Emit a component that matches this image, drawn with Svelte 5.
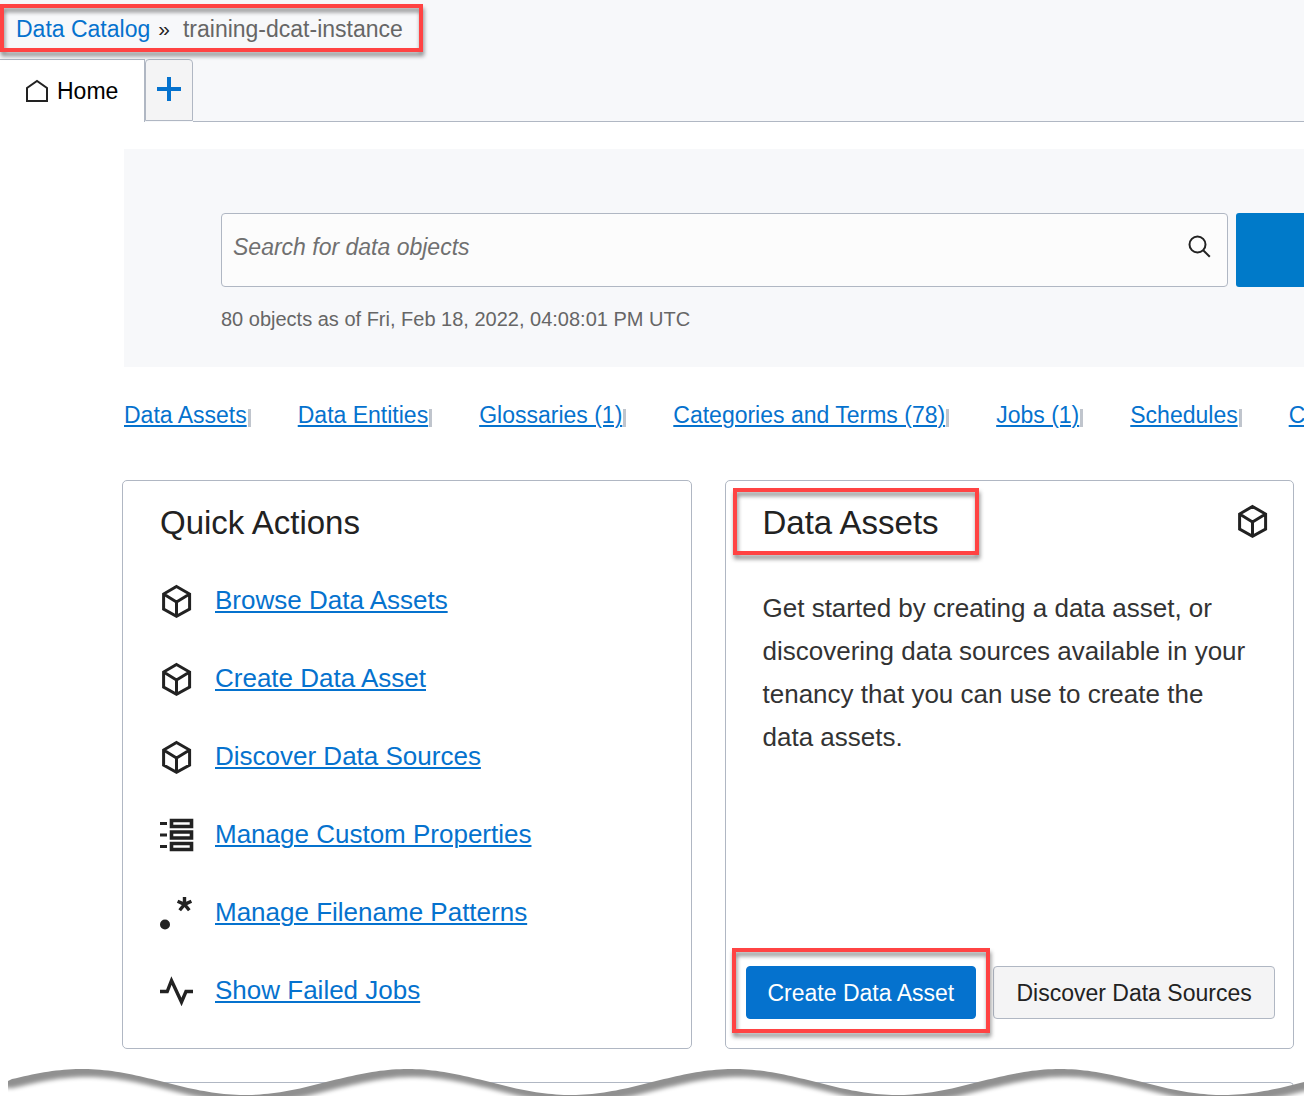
<script>
  const objectLinks = ['Data Assets', 'Data Entities', 'Glossaries (1)', 'Categories and Terms (78)', 'Jobs (1)', 'Schedules', 'C'];
  const actions = [
    { icon: 'cube', label: 'Browse Data Assets' },
    { icon: 'cube', label: 'Create Data Asset' },
    { icon: 'cube', label: 'Discover Data Sources' },
    { icon: 'list', label: 'Manage Custom Properties' },
    { icon: 'pattern', label: 'Manage Filename Patterns' },
    { icon: 'pulse', label: 'Show Failed Jobs' }
  ];

  // Torn page edge: a repeating sine wave, long enough for wide windows.
  const period = 326;
  let wave = '';
  for (let x = 12; x <= 3200; x += 4) {
    wave += ` L${x} ${(13 - 13 * Math.cos(((x - 82) / period) * 2 * Math.PI)).toFixed(1)}`;
  }
  const edge = `M8 12${wave} V60 H8 Z`;
  const paper = `M-40 11 H8${wave} V60 H-40 Z`;
</script>

{#snippet icon(name)}
  <svg class="icon" viewBox="0 0 34 34" aria-hidden="true" fill="none" stroke="#222" stroke-width="3">
    {#if name === 'cube'}
      <path d="M16.5 2.5 29.6 10V25L16.5 32.2 3.6 25V10Z M3.6 10 16.5 18 29.6 10 M16.5 18V32" />
    {:else if name === 'list'}
      <path d="M11.5 2.5H31.5V8.5H11.5Z M11.5 14H31.5V20H11.5Z M11.5 25.5H31.5V31.5H11.5Z" stroke-width="3.6" />
      <path d="M0 5.5H7 M0 17H7 M0 28.5H7" />
    {:else if name === 'pattern'}
      <circle cx="5" cy="28.5" r="5" fill="#222" stroke="none" />
      <path d="M24.5 8.4V1 M24.5 8.4 31.4 5.3 M24.5 8.4 29.3 14.3 M24.5 8.4 19.7 14.3 M24.5 8.4 17.6 5.3" stroke-width="3.4" />
    {:else}
      <path d="M0 17.5H7.2L11.5 6.5 21.5 28 26 17.5H33" stroke-width="3.4" />
    {/if}
  </svg>
{/snippet}

<div class="page">
  <header>
    <nav class="crumbs" aria-label="Breadcrumb">
      <a href="#catalog">Data Catalog</a>
      <span class="sep">»</span>
      <span class="current">training-dcat-instance</span>
      <span class="mark"></span>
    </nav>
    <div class="tabs">
      <button class="home">
        <svg width="24" height="24" viewBox="0 0 24 24" fill="none" stroke="#222" stroke-width="2" aria-hidden="true">
          <path d="M2 22V9L12 2 22 9V22Z" />
        </svg>
        Home
      </button>
      <button class="add" aria-label="Add tab">
        <svg width="24" height="24" viewBox="0 0 24 24" stroke="#0572ce" stroke-width="4" aria-hidden="true">
          <path d="M12 0V24M0 12H24" />
        </svg>
      </button>
      <div class="rest"></div>
    </div>
  </header>

  <main>
    <section class="search">
      <div class="search-row">
        <div class="field">
          <input type="text" placeholder="Search for data objects" aria-label="Search for data objects" />
          <svg width="24" height="24" viewBox="0 0 24 24" fill="none" stroke="#222" stroke-width="2" aria-hidden="true">
            <circle cx="10.5" cy="9.5" r="8" />
            <path d="M16.2 15.2 22.8 21.8" />
          </svg>
        </div>
        <button class="go" aria-label="Search"></button>
      </div>
      <p>80 objects as of Fri, Feb 18, 2022, 04:08:01 PM UTC</p>
    </section>

    <nav class="objects" aria-label="Objects">
      {#each objectLinks as label}
        <span class="object"><a href="#objects">{label}</a></span>
      {/each}
    </nav>

    <div class="cards">
      <section class="card">
        <h2>Quick Actions</h2>
        <ul>
          {#each actions as action}
            <li>{@render icon(action.icon)}<a href="#action">{action.label}</a></li>
          {/each}
        </ul>
      </section>

      <section class="card">
        <div class="card-head">
          <h2>Data Assets<span class="mark"></span></h2>
          {@render icon('cube')}
        </div>
        <p>Get started by creating a data asset, or discovering data sources available in your tenancy that you can use to create the data assets.</p>
        <div class="buttons">
          <div class="marked">
            <button class="primary">Create Data Asset</button>
            <span class="mark"></span>
          </div>
          <button class="secondary">Discover Data Sources</button>
        </div>
      </section>
    </div>
  </main>

  <div class="more">
    <div class="next"></div>
    <svg class="torn" viewBox="0 0 3200 27" width="3200" height="27" aria-hidden="true">
      <defs>
        <clipPath id="torn-shape"><path d={edge} /></clipPath>
        <filter id="soft" filterUnits="userSpaceOnUse" x="-60" y="-20" width="3280" height="120">
          <feGaussianBlur stdDeviation="2" />
        </filter>
      </defs>
      <path d={edge} fill="#909090" />
      <g clip-path="url(#torn-shape)">
        <g filter="url(#soft)"><path class="paper" d={paper} /></g>
      </g>
    </svg>
  </div>
</div>

<style>
  :global(body) { margin: 0; background: #fff; }
  .page {
    font: 23px/28px "Liberation Sans", Arial, sans-serif;
    color: #222;
    overflow: hidden;
  }
  .page * { box-sizing: border-box; }
  a { color: #0572ce; }
  button { font: inherit; cursor: pointer; }
  .mark {
    position: absolute;
    border: 4px solid #ff4343;
    filter: drop-shadow(1px 4px 2px rgba(0, 0, 0, 0.45));
    pointer-events: none;
  }

  header { background: #f7f8fa; }
  .crumbs {
    position: relative;
    display: flex;
    width: max-content;
    height: 59px;
    padding: 15px 20px 0 16px;
  }
  .crumbs a { text-decoration: none; }
  .sep { margin: 0 13px 0 8px; font-size: 21px; }
  .current { color: #666; }
  .crumbs .mark { inset: 4px 0 7px 0; }
  .tabs { display: flex; height: 63px; }
  .tabs button { display: flex; align-items: center; }
  .home {
    gap: 8px;
    padding: 0 26px 0 25px;
    border: solid #b0b7c3;
    border-width: 1px 1px 0 0;
    background: #fff;
    color: #000;
  }
  .add {
    width: 48px;
    height: 62px;
    justify-content: center;
    padding: 0 0 2px;
    border: 1px solid #b0b7c3;
    border-radius: 4px 4px 0 0;
    background: #f4f4f5;
  }
  .rest { flex: 1; border-bottom: 1px solid #b0b7c3; }

  .search {
    margin: 27px 0 0 124px;
    padding: 64px 0 34px 97px;
    background: #f7f8fa;
  }
  .search-row { display: flex; gap: 8px; height: 74px; }
  .field {
    flex: 1;
    display: flex;
    align-items: center;
    padding: 0 16px 6px 0;
    border: 1px solid #b0b7c3;
    border-radius: 4px;
    background: #fcfcfc;
  }
  .field input {
    flex: 1;
    padding: 0 11px;
    border: 0;
    outline: 0;
    background: none;
    font: inherit;
  }
  .field input::placeholder { color: #707070; font-style: italic; opacity: 1; }
  .go { width: 68px; border: 0; border-radius: 3px 0 0 3px; background: #007ac9; }
  .search p { margin: 18px 0 0; font-size: 20px; color: #666; }

  .objects {
    display: flex;
    gap: 47px;
    margin: 34px 0 0 124px;
    white-space: nowrap;
    overflow: hidden;
  }
  .objects a, li a { text-decoration-thickness: 2px; text-underline-offset: 2px; }
  .object { display: flex; gap: 1px; align-items: center; }
  .object::after { content: ""; width: 3px; height: 18px; margin-top: 6px; background: #c0c5cd; }

  .cards {
    display: grid;
    grid-template-columns: repeat(2, minmax(0, 1fr));
    gap: 33px;
    margin: 51px 10px 0 122px;
  }
  .card {
    display: flex;
    flex-direction: column;
    padding: 22px 18px 19px 37px;
    border: 1px solid #b0b7c3;
    border-radius: 5px;
  }
  h2 { position: relative; margin: 0; font-size: 33px; line-height: 40px; font-weight: 400; }
  h2 .mark { inset: -15px -40px -12px -30px; }
  .icon { flex: none; width: 34px; height: 34px; }
  ul { margin: 18px 0 0; padding: 0; list-style: none; }
  li { display: flex; align-items: center; gap: 21px; height: 78px; font-size: 26px; }
  li .icon { margin-top: 2px; }
  .card-head { display: flex; justify-content: space-between; align-items: center; padding-right: 5px; }
  .card-head .icon { margin-bottom: 4px; }
  .card p { margin: 44px 0 0; padding-right: 20px; font-size: 26px; line-height: 43px; color: #333; }
  .buttons { display: flex; gap: 17px; margin: auto 0 10px -17px; white-space: nowrap; }
  .buttons button { height: 53px; padding: 0 21px; border: 1px solid #b0b7c3; border-radius: 4px; }
  .marked { position: relative; }
  .marked .mark { inset: -18px -14px -14px -14px; }
  .buttons .primary { border-color: #0572ce; background: #0572ce; color: #fff; }
  .buttons .secondary { flex: 1; background: #f4f4f5; color: #222; }

  .more { position: relative; padding: 33px 10px 0 122px; overflow: hidden; }
  .next { height: 14px; border: 1px solid #b0b7c3; border-bottom: 0; border-radius: 5px 5px 0 0; }
  .torn { position: absolute; top: 20px; left: 0; }
  .paper { fill: #fff; transform: translate(5px, 8px); }
</style>
